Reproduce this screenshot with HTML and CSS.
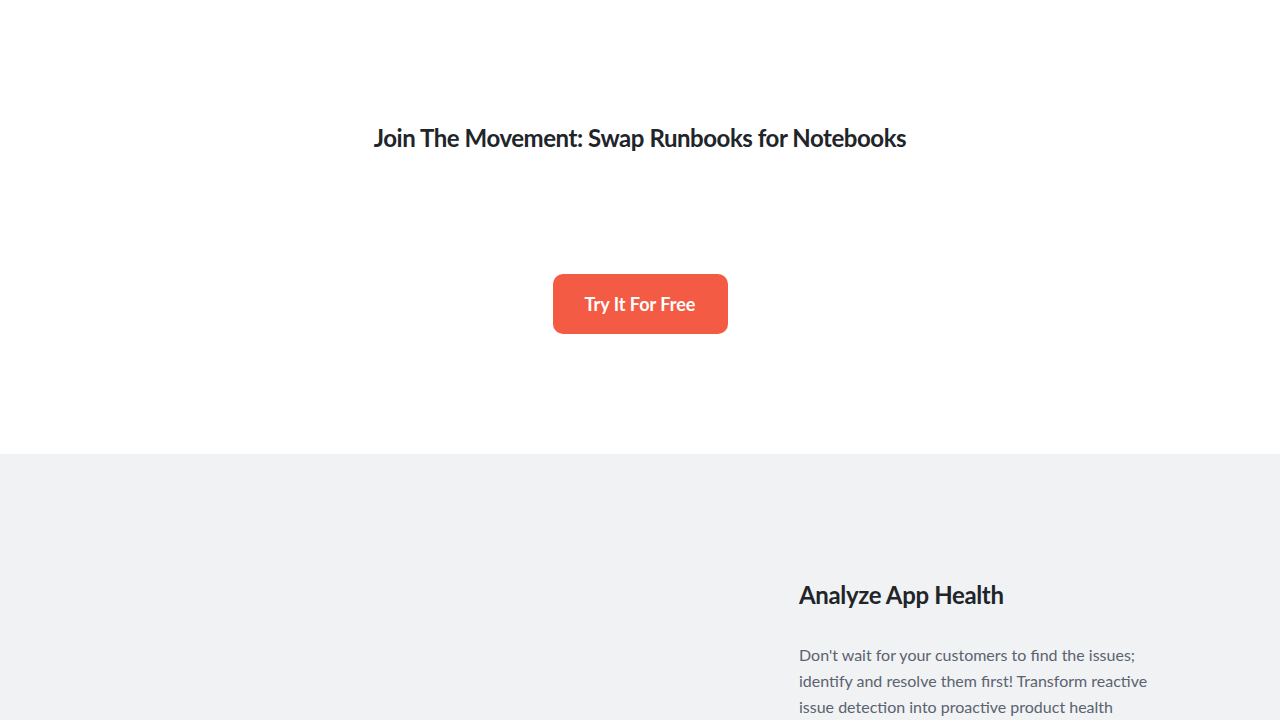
FILE: index.html
```html
<!DOCTYPE html>
<html lang="en">
<head>
    <meta charset="UTF-8">
    <meta name="viewport" content="width=device-width, initial-scale=1.0">
    <title>Swap Runbooks for Notebooks</title>
    <link rel="stylesheet" href="styles.css">
</head>
<body>
    <section class="cta">
        <h2>Join The Movement: Swap Runbooks for Notebooks</h2>
        <a class="btn" href="#">Try It For Free</a>
    </section>
    <section class="feature">
        <div class="feature-grid">
            <div class="feature-media"></div>
            <div class="feature-text">
                <h3>Analyze App Health</h3>
                <p>Don't wait for your customers to find the issues; identify and resolve them first! Transform reactive issue detection into proactive product health monitoring with notebooks your whole team can run.</p>
            </div>
        </div>
    </section>
</body>
</html>
```

FILE: styles.css
```css
body {
    font-family: Lato, 'Noto Sans', sans-serif;
    margin: 0;
    color: #212529;
    background: #ffffff;
}
.cta {
    display: flex;
    flex-direction: column;
    align-items: center;
    padding: 120px 0;
    height: 214px;
    background: #ffffff;
}
.cta h2 {
    margin: 0;
    font-size: 24px;
    line-height: 36px;
    font-weight: 700;
    color: #212529;
    letter-spacing: -0.45px;
}
.btn {
    margin-top: 118px;
    display: inline-flex;
    align-items: center;
    justify-content: center;
    width: 175px;
    height: 60px;
    background: #f45b45;
    color: #ffffff;
    border-radius: 10px;
    font-size: 18px;
    font-weight: 700;
    text-decoration: none;
}
.feature {
    background: #f0f2f4;
    padding: 123px 100px 80px;
}
.feature-grid {
    display: grid;
    grid-template-columns: 1fr 381px;
}
.feature-text h3 {
    margin: 0;
    font-size: 24px;
    line-height: 36px;
    font-weight: 700;
    color: #212529;
    letter-spacing: -0.35px;
}
.feature-text p {
    margin: 29px 0 0;
    font-size: 16px;
    line-height: 26px;
    color: #5b6270;
}
```
